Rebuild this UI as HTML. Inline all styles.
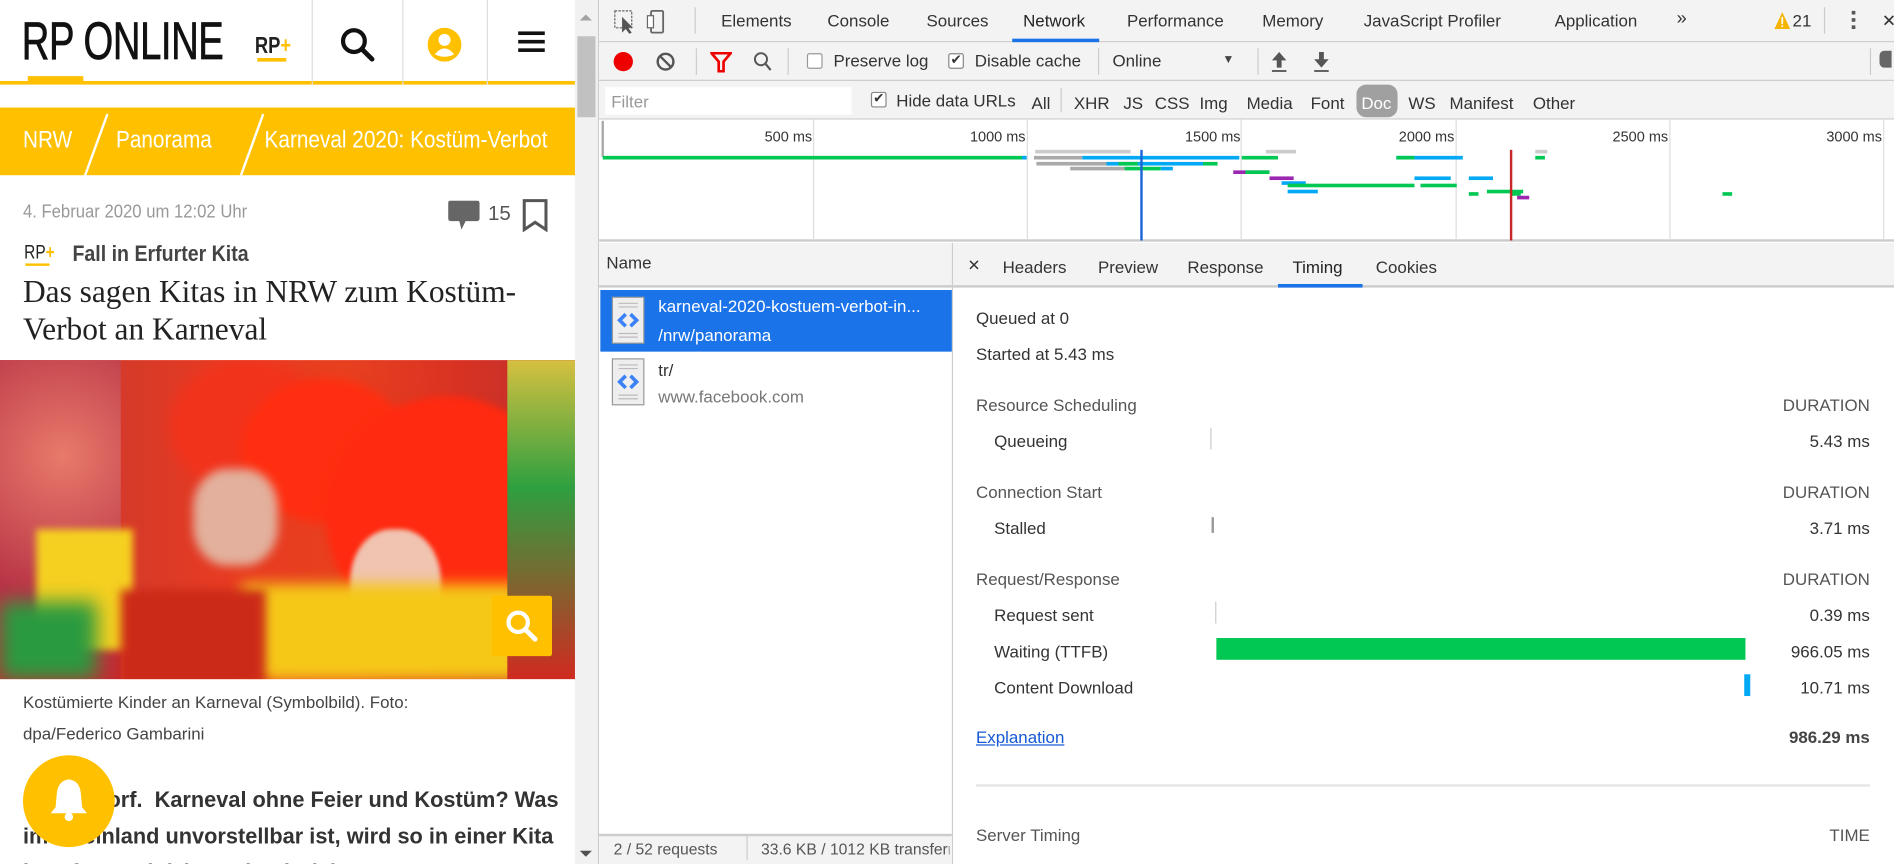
<!DOCTYPE html>
<html><head><meta charset="utf-8"><style>
*{box-sizing:border-box;margin:0;padding:0}
html,body{width:1894px;height:864px;overflow:hidden;background:#fff}
#w{position:absolute;left:0;top:0;width:1568px;height:715px;transform:scale(1.20791,1.2084);transform-origin:0 0;font-family:"Liberation Sans",sans-serif;color:#333;font-size:14px}
.a{position:absolute;white-space:nowrap}
.dt{font-size:14px;color:#333}
.g{color:#555}
.bar{position:absolute;height:3px}
.bc{font-size:20px;color:#fff;transform:scaleX(.86);transform-origin:0 0}
</style></head><body><div id="w">

<!-- LEFT PAGE -->
<div class="a" style="left:0;top:0;width:476px;height:715px;background:#fff;overflow:hidden">
  <div class="a" style="left:0;top:0;width:476px;height:70px;border-bottom:3px solid #ffc000"></div>
  <div class="a" style="left:258px;top:0;width:1px;height:70px;background:#ddd"></div>
  <div class="a" style="left:333px;top:0;width:1px;height:70px;background:#ddd"></div>
  <div class="a" style="left:403px;top:0;width:1px;height:70px;background:#ddd"></div>
  <div class="a" style="left:18px;top:10px;font-size:44px;color:#111;letter-spacing:-0.5px;transform:scaleX(.72);transform-origin:0 0;-webkit-text-stroke:0.6px #111">RP ONLINE</div>
  <div class="a" style="left:23px;top:63px;width:46px;height:6px;background:#ffc000"></div>
  <div class="a" style="left:211px;top:28px;font-size:19px;color:#222;font-weight:bold;transform:scaleX(.8);transform-origin:0 0">RP<span style="color:#ffc000">+</span></div>
  <div class="a" style="left:213px;top:48px;width:24px;height:3px;background:#ffc000"></div>
  <svg class="a" style="left:280px;top:21px" width="32" height="32" viewBox="0 0 32 32"><circle cx="13" cy="13" r="9" fill="none" stroke="#111" stroke-width="3.5"/><line x1="20" y1="20" x2="28" y2="28" stroke="#111" stroke-width="4" stroke-linecap="round"/></svg>
  <svg class="a" style="left:354px;top:23px" width="28" height="28" viewBox="0 0 28 28"><circle cx="14" cy="14" r="14" fill="#ffc000"/><circle cx="14" cy="10" r="5" fill="#fff"/><path d="M6 22 Q14 12 22 22 Q14 26 6 22Z" fill="#fff"/></svg>
  <div class="a" style="left:429px;top:26px;width:22px;height:3px;background:#111;box-shadow:0 7px 0 #111,0 14px 0 #111"></div>

  <div class="a" style="left:0;top:89px;width:476px;height:56px;background:#ffc000"></div>
  <div class="a bc" style="left:19px;top:105px">NRW</div>
  <div class="a" style="left:88px;top:94px;width:2px;height:58px;background:#fff;transform:rotate(20deg);transform-origin:0 0"></div>
  <div class="a bc" style="left:96px;top:105px">Panorama</div>
  <div class="a" style="left:217px;top:94px;width:2px;height:58px;background:#fff;transform:rotate(20deg);transform-origin:0 0"></div>
  <div class="a" style="left:219px;top:105px;width:238px;overflow:hidden"><div class="bc">Karneval 2020: Kostüm-Verbot an Karneval</div></div>

  <div class="a" style="left:19px;top:167px;font-size:15px;color:#999;transform:scaleX(.92);transform-origin:0 0">4. Februar 2020 um 12:02 Uhr</div>
  <svg class="a" style="left:371px;top:166px" width="27" height="25" viewBox="0 0 27 25"><rect x="0" y="0" width="26" height="17" rx="2" fill="#666"/><path d="M9 16 L11 24 L15 16Z" fill="#666"/></svg>
  <div class="a" style="left:404px;top:167px;font-size:17px;color:#555">15</div>
  <svg class="a" style="left:432px;top:164px" width="22" height="28" viewBox="0 0 22 28"><path d="M2 2 H20 V26 L11 20 L2 26Z" fill="none" stroke="#555" stroke-width="2.5"/></svg>
  <div class="a" style="left:20px;top:201px;font-size:16px;color:#222;transform:scaleX(.8);transform-origin:0 0">RP<span style="color:#ffc000;font-weight:bold">+</span></div>
  <div class="a" style="left:21px;top:218px;width:20px;height:2px;background:#ffc000"></div>
  <div class="a" style="left:60px;top:200px;font-size:18px;color:#444;font-weight:bold;transform:scaleX(.9);transform-origin:0 0">Fall in Erfurter Kita</div>
  <div class="a" style="left:19px;top:226px;font-size:26px;line-height:31px;color:#222;font-family:'Liberation Serif',serif;white-space:normal;width:450px">Das sagen Kitas in NRW zum Kostüm-Verbot an Karneval</div>

  <div class="a" style="left:0;top:298px;width:476px;height:264px;overflow:hidden;background:linear-gradient(90deg,#b8243a 0%,#d43a2a 20%,#e83b22 40%,#e8401f 60%,#d83223 80%,#b83030 100%)">
    <div class="a" style="left:-20px;top:0;width:120px;height:264px;background:radial-gradient(circle at 60% 30%,#e87a6a,#b83346 60%,#c42b30)"></div>
    <div class="a" style="left:140px;top:0;width:130px;height:110px;border-radius:50%;background:#f2331c;filter:blur(6px)"></div>
    <div class="a" style="left:200px;top:15px;width:140px;height:120px;border-radius:50%;background:#ff2e10;filter:blur(4px)"></div>
    <div class="a" style="left:270px;top:30px;width:200px;height:200px;border-radius:50%;background:#ff2a10;filter:blur(3px)"></div>
    <div class="a" style="left:160px;top:90px;width:70px;height:80px;border-radius:40%;background:#e2b09c;filter:blur(4px)"></div>
    <div class="a" style="left:290px;top:140px;width:75px;height:95px;border-radius:45%;background:#f0c4b0;filter:blur(2px)"></div>
    <div class="a" style="left:30px;top:140px;width:80px;height:100px;background:#f5d020;filter:blur(3px)"></div>
    <div class="a" style="left:200px;top:185px;width:230px;height:80px;background:#f5c818;filter:blur(6px)"></div>
    <div class="a" style="left:100px;top:190px;width:120px;height:80px;background:#cc2a18;filter:blur(4px)"></div>
    <div class="a" style="left:420px;top:0;width:60px;height:264px;background:linear-gradient(#d6c040,#2ea040 40%,#d02a20)"></div>
    <div class="a" style="left:0;top:200px;width:80px;height:64px;background:#2a9a40;filter:blur(8px)"></div>
    <div class="a" style="left:407px;top:195px;width:50px;height:50px;background:#ffc000;border-radius:2px"></div>
    <svg class="a" style="left:417px;top:205px" width="30" height="30" viewBox="0 0 30 30"><circle cx="12" cy="12" r="8" fill="none" stroke="#fff" stroke-width="3.5"/><line x1="18" y1="18" x2="26" y2="26" stroke="#fff" stroke-width="4" stroke-linecap="round"/></svg>
  </div>
  <div class="a" style="left:19px;top:568px;font-size:14px;line-height:26px;color:#444;white-space:normal;width:400px">Kostümierte Kinder an Karneval (Symbolbild). Foto: dpa/Federico Gambarini</div>
  <div class="a" style="left:19px;top:647px;font-size:18px;line-height:30px;color:#333;font-weight:bold;white-space:normal;width:450px">Düsseldorf.&nbsp; Karneval ohne Feier und Kostüm? Was im Rheinland unvorstellbar ist, wird so in einer Kita in Erfurt praktiziert. Die Einrichtung</div>
  <div class="a" style="left:19px;top:625px;width:76px;height:76px;border-radius:50%;background:#ffc000"></div>
  <svg class="a" style="left:40px;top:643px" width="34" height="38" viewBox="0 0 34 38"><path d="M17 2 Q8 3 7 14 L6 25 L2 30 H32 L28 25 L27 14 Q26 3 17 2Z" fill="#fff"/><circle cx="17" cy="33" r="3.5" fill="#fff"/></svg>
</div>
<!-- scrollbar -->
<div class="a" style="left:476px;top:0;width:19px;height:715px;background:#f1f1f1"></div>
<div class="a" style="left:478px;top:30px;width:15px;height:67px;background:#c1c1c1"></div>
<div class="a" style="left:480px;top:12px;width:0;height:0;border:5px solid transparent;border-bottom-color:#a3a3a3;border-top:0"></div>
<div class="a" style="left:480px;top:704px;width:0;height:0;border:5px solid transparent;border-top-color:#505050;border-bottom:0"></div>
<div class="a" style="left:495px;top:0;width:1px;height:715px;background:#ccc"></div>

<!-- DEVTOOLS -->
<div class="a dt" style="left:496px;top:0;width:1072px;height:715px;background:#fff">
  <div class="a" style="left:0;top:0;width:1072px;height:35px;background:#f3f3f3;border-bottom:1px solid #ccc"></div>
  <svg class="a" style="left:12px;top:8px" width="50" height="20" viewBox="0 0 50 20"><rect x="1" y="1" width="14" height="14" fill="none" stroke="#666" stroke-dasharray="2 1"/><path d="M7 6 L7 19 L10 16 L13 20 L15 19 L12 15 L16 15Z" fill="#555"/><rect x="31" y="1" width="10" height="18" rx="1" fill="none" stroke="#666" stroke-width="1.5"/><rect x="28" y="5" width="5" height="10" fill="#fff" stroke="#666"/></svg>
  <div class="a" style="left:79px;top:6px;width:1px;height:22px;background:#ccc"></div>
  <div class="a" style="left:101px;top:9px">Elements</div>
  <div class="a" style="left:189px;top:9px">Console</div>
  <div class="a" style="left:271px;top:9px">Sources</div>
  <div class="a" style="left:351px;top:9px;color:#222">Network</div>
  <div class="a" style="left:342px;top:32px;width:72px;height:3px;background:#1a73e8"></div>
  <div class="a" style="left:437px;top:9px">Performance</div>
  <div class="a" style="left:549px;top:9px">Memory</div>
  <div class="a" style="left:633px;top:9px">JavaScript Profiler</div>
  <div class="a" style="left:791px;top:9px">Application</div>
  <div class="a" style="left:892px;top:7px;font-size:15px">»</div>
  <svg class="a" style="left:973px;top:10px" width="13" height="14" viewBox="0 0 13 14"><path d="M6.5 0 L13 14 H0Z" fill="#f4b400"/><rect x="5.8" y="4" width="1.4" height="6" fill="#fff"/><rect x="5.8" y="11" width="1.4" height="1.4" fill="#fff"/></svg>
  <div class="a" style="left:988px;top:9px">21</div>
  <div class="a" style="left:1014px;top:6px;width:1px;height:22px;background:#ccc"></div>
  <div class="a" style="left:1037px;top:9px;width:3px;height:3px;background:#555;box-shadow:0 6px 0 #555,0 12px 0 #555"></div>
  <div class="a" style="left:1062px;top:9px;font-size:14px">✕</div>

  <!-- toolbar -->
  <div class="a" style="left:0;top:35px;width:1072px;height:32px;background:#f3f3f3;border-bottom:1px solid #ccc"></div>
  <div class="a" style="left:12px;top:43px;width:16px;height:16px;border-radius:50%;background:#e00"></div>
  <svg class="a" style="left:47px;top:43px" width="16" height="16" viewBox="0 0 16 16"><circle cx="8" cy="8" r="6.5" fill="none" stroke="#555" stroke-width="2"/><line x1="3.5" y1="3.5" x2="12.5" y2="12.5" stroke="#555" stroke-width="2"/></svg>
  <div class="a" style="left:80px;top:40px;width:1px;height:22px;background:#ccc"></div>
  <svg class="a" style="left:92px;top:43px" width="18" height="17" viewBox="0 0 18 17"><path d="M1 1 H17 L11 8 V16 H7 V8Z" fill="none" stroke="#e00" stroke-width="2.2"/></svg>
  <svg class="a" style="left:127px;top:42px" width="17" height="18" viewBox="0 0 17 18"><circle cx="7" cy="7" r="5" fill="none" stroke="#555" stroke-width="1.6"/><line x1="10.5" y1="10.5" x2="15" y2="16" stroke="#555" stroke-width="1.8"/></svg>
  <div class="a" style="left:156px;top:40px;width:1px;height:22px;background:#ccc"></div>
  <div class="a" style="left:172px;top:44px;width:13px;height:13px;border:1px solid #999;border-radius:2px;background:#fff"></div>
  <div class="a" style="left:194px;top:42px">Preserve log</div>
  <div class="a" style="left:289px;top:44px;width:13px;height:13px;border:1px solid #888;border-radius:2px;background:#fff;font-size:11px;line-height:11px;text-align:center">✔</div>
  <div class="a" style="left:311px;top:42px">Disable cache</div>
  <div class="a" style="left:413px;top:40px;width:1px;height:22px;background:#ccc"></div>
  <div class="a" style="left:425px;top:42px">Online</div>
  <div class="a" style="left:516px;top:44px;font-size:10px;color:#444">▼</div>
  <div class="a" style="left:545px;top:40px;width:1px;height:22px;background:#ccc"></div>
  <svg class="a" style="left:556px;top:42px" width="60" height="18" viewBox="0 0 60 18"><path d="M7 1 L13 8 H9 V14 H5 V8 H1Z" fill="#555"/><rect x="1" y="16" width="12" height="1.5" fill="#555"/><path d="M42 14 L48 7 H44 V1 H40 V7 H36Z" fill="#555"/><rect x="36" y="16" width="12" height="1.5" fill="#555"/></svg>
  <div class="a" style="left:1052px;top:40px;width:1px;height:22px;background:#ccc"></div>
  <div class="a" style="left:1060px;top:42px;width:10px;height:14px;background:#666;border-radius:4px 0 0 4px"></div>

  <!-- filter row -->
  <div class="a" style="left:0;top:67px;width:1072px;height:32px;background:#f3f3f3;border-bottom:1px solid #ccc"></div>
  <div class="a" style="left:5px;top:72px;width:204px;height:23px;background:#fff"></div>
  <div class="a" style="left:10px;top:76px;color:#999">Filter</div>
  <div class="a" style="left:225px;top:76px;width:13px;height:13px;border:1px solid #888;border-radius:2px;background:#fff;font-size:11px;line-height:11px;text-align:center">✔</div>
  <div class="a" style="left:246px;top:75px">Hide data URLs</div>
  <div class="a" style="left:358px;top:77px">All</div>
  <div class="a" style="left:382px;top:73px;width:1px;height:20px;background:#ccc"></div>
  <div class="a" style="left:393px;top:77px">XHR</div>
  <div class="a" style="left:434px;top:77px">JS</div>
  <div class="a" style="left:460px;top:77px">CSS</div>
  <div class="a" style="left:497px;top:77px">Img</div>
  <div class="a" style="left:536px;top:77px">Media</div>
  <div class="a" style="left:589px;top:77px">Font</div>
  <div class="a" style="left:627px;top:70px;width:34px;height:27px;background:#a0a0a0;border-radius:8px"></div>
  <div class="a" style="left:631px;top:77px;color:#fff">Doc</div>
  <div class="a" style="left:670px;top:77px">WS</div>
  <div class="a" style="left:704px;top:77px">Manifest</div>
  <div class="a" style="left:773px;top:77px">Other</div>

  <!-- overview -->
  <div class="a" style="left:0;top:99px;width:1072px;height:101px;background:#fff;border-bottom:2px solid #ccc"></div>
  <div class="a" style="left:2px;top:100px;width:2px;height:30px;background:#aaa"></div>
  <div class="a" style="left:177px;top:99px;width:1px;height:100px;background:#ddd"></div>
  <div class="a" style="left:354px;top:99px;width:1px;height:100px;background:#ddd"></div>
  <div class="a" style="left:531px;top:99px;width:1px;height:100px;background:#ddd"></div>
  <div class="a" style="left:709px;top:99px;width:1px;height:100px;background:#ddd"></div>
  <div class="a" style="left:886px;top:99px;width:1px;height:100px;background:#ddd"></div>
  <div class="a" style="left:1063px;top:99px;width:1px;height:100px;background:#ddd"></div>
  <div class="a" style="left:137px;top:106px;font-size:12px">500 ms</div>
  <div class="a" style="left:307px;top:106px;font-size:12px">1000 ms</div>
  <div class="a" style="left:485px;top:106px;font-size:12px">1500 ms</div>
  <div class="a" style="left:662px;top:106px;font-size:12px">2000 ms</div>
  <div class="a" style="left:839px;top:106px;font-size:12px">2500 ms</div>
  <div class="a" style="left:1016px;top:106px;font-size:12px">3000 ms</div>
  <div class="bar" style="left:3px;top:129px;width:350px;background:#00c853"></div>
  <div class="bar" style="left:350px;top:129px;width:4px;background:#03a9f4"></div>
  <div class="bar" style="left:361px;top:124px;width:79px;background:#ccc"></div>
  <div class="bar" style="left:360px;top:129px;width:40px;background:#aaa"></div>
  <div class="bar" style="left:400px;top:129px;width:130px;background:#03a9f4"></div>
  <div class="bar" style="left:362px;top:134px;width:90px;background:#aaa"></div>
  <div class="bar" style="left:420px;top:134px;width:80px;background:#03a9f4"></div>
  <div class="bar" style="left:430px;top:134px;width:16px;background:#00c853"></div>
  <div class="bar" style="left:500px;top:134px;width:12px;background:#00c853"></div>
  <div class="bar" style="left:390px;top:138px;width:45px;background:#aaa"></div>
  <div class="bar" style="left:435px;top:138px;width:30px;background:#00c853"></div>
  <div class="bar" style="left:465px;top:138px;width:10px;background:#03a9f4"></div>
  <div class="bar" style="left:532px;top:129px;width:30px;background:#00c853"></div>
  <div class="bar" style="left:552px;top:124px;width:25px;background:#ccc"></div>
  <div class="bar" style="left:525px;top:141px;width:30px;background:#9c27b0"></div>
  <div class="bar" style="left:535px;top:141px;width:20px;background:#00c853"></div>
  <div class="bar" style="left:555px;top:146px;width:20px;background:#9c27b0"></div>
  <div class="bar" style="left:565px;top:150px;width:20px;background:#03a9f4"></div>
  <div class="bar" style="left:570px;top:152px;width:105px;background:#00c853"></div>
  <div class="bar" style="left:570px;top:157px;width:25px;background:#03a9f4"></div>
  <div class="bar" style="left:660px;top:129px;width:55px;background:#03a9f4"></div>
  <div class="bar" style="left:660px;top:129px;width:15px;background:#00c853"></div>
  <div class="bar" style="left:675px;top:146px;width:30px;background:#03a9f4"></div>
  <div class="bar" style="left:680px;top:152px;width:30px;background:#00c853"></div>
  <div class="bar" style="left:720px;top:146px;width:20px;background:#03a9f4"></div>
  <div class="bar" style="left:735px;top:157px;width:30px;background:#00c853"></div>
  <div class="bar" style="left:775px;top:124px;width:10px;background:#ccc"></div>
  <div class="bar" style="left:775px;top:129px;width:8px;background:#00c853"></div>
  <div class="bar" style="left:720px;top:159px;width:8px;background:#00c853"></div>
  <div class="bar" style="left:755px;top:159px;width:8px;background:#00c853"></div>
  <div class="bar" style="left:760px;top:162px;width:10px;background:#9c27b0"></div>
  <div class="bar" style="left:930px;top:159px;width:8px;background:#00c853"></div>
  <div class="a" style="left:448px;top:124px;width:1.5px;height:75px;background:#1a65d6"></div>
  <div class="a" style="left:754px;top:124px;width:1.5px;height:75px;background:#c62828"></div>

  <!-- list -->
  <div class="a" style="left:0;top:201px;width:292px;height:37px;background:#f3f3f3;border-bottom:2px solid #ccc"></div>
  <div class="a" style="left:6px;top:209px">Name</div>
  <div class="a" style="left:292px;top:201px;width:1px;height:514px;background:#ccc"></div>
  <div class="a" style="left:1px;top:240px;width:291px;height:51px;background:#1a73e8"></div>
  <svg class="a" style="left:10px;top:245px" width="28" height="40" viewBox="0 0 28 40"><rect x="1" y="1" width="26" height="38" fill="#eee" stroke="#999"/><path d="M6 6H22M6 9H22M6 31H22M6 34H22" stroke="#bbb"/><path d="M12 15 L7 20 L12 25 M16 15 L21 20 L16 25" fill="none" stroke="#3b82f6" stroke-width="3"/></svg>
  <div class="a" style="left:49px;top:245px;color:#fff">karneval-2020-kostuem-verbot-in...</div>
  <div class="a" style="left:49px;top:269px;color:#fff">/nrw/panorama</div>
  <svg class="a" style="left:10px;top:296px" width="28" height="40" viewBox="0 0 28 40"><rect x="1" y="1" width="26" height="38" fill="#eee" stroke="#999"/><path d="M6 6H22M6 9H22M6 31H22M6 34H22" stroke="#bbb"/><path d="M12 15 L7 20 L12 25 M16 15 L21 20 L16 25" fill="none" stroke="#3b82f6" stroke-width="3"/></svg>
  <div class="a" style="left:49px;top:298px">tr/</div>
  <div class="a" style="left:49px;top:320px;color:#777">www.facebook.com</div>
  <div class="a" style="left:0;top:690px;width:292px;height:25px;background:#f3f3f3;border-top:2px solid #ccc"></div>
  <div class="a" style="left:12px;top:695px;color:#555;font-size:13px">2 / 52 requests</div>
  <div class="a" style="left:122px;top:692px;width:1px;height:20px;background:#ccc"></div>
  <div class="a" style="left:134px;top:695px;color:#555;font-size:13px;width:156px;overflow:hidden">33.6 KB / 1012 KB transferred</div>

  <!-- detail tabs -->
  <div class="a" style="left:293px;top:201px;width:779px;height:37px;background:#f3f3f3;border-bottom:2px solid #ccc"></div>
  <div class="a" style="left:305px;top:212px;font-size:13px">✕</div>
  <div class="a" style="left:334px;top:213px">Headers</div>
  <div class="a" style="left:413px;top:213px">Preview</div>
  <div class="a" style="left:487px;top:213px">Response</div>
  <div class="a" style="left:574px;top:213px;color:#222">Timing</div>
  <div class="a" style="left:562px;top:235px;width:70px;height:3px;background:#1a73e8"></div>
  <div class="a" style="left:643px;top:213px">Cookies</div>

  <div class="a" style="left:312px;top:255px">Queued at 0</div>
  <div class="a" style="left:312px;top:285px">Started at 5.43 ms</div>
  <div class="a g" style="left:312px;top:327px">Resource Scheduling</div>
  <div class="a g" style="right:20px;top:327px">DURATION</div>
  <div class="a" style="left:327px;top:357px">Queueing</div>
  <div class="a" style="left:506px;top:354px;width:1px;height:18px;background:#ccc"></div>
  <div class="a" style="right:20px;top:357px">5.43 ms</div>
  <div class="a g" style="left:312px;top:399px">Connection Start</div>
  <div class="a g" style="right:20px;top:399px">DURATION</div>
  <div class="a" style="left:327px;top:429px">Stalled</div>
  <div class="a" style="left:507px;top:428px;width:2px;height:13px;background:#999"></div>
  <div class="a" style="right:20px;top:429px">3.71 ms</div>
  <div class="a g" style="left:312px;top:471px">Request/Response</div>
  <div class="a g" style="right:20px;top:471px">DURATION</div>
  <div class="a" style="left:327px;top:501px">Request sent</div>
  <div class="a" style="left:510px;top:498px;width:1px;height:18px;background:#ccc"></div>
  <div class="a" style="right:20px;top:501px">0.39 ms</div>
  <div class="a" style="left:327px;top:531px">Waiting (TTFB)</div>
  <div class="a" style="left:511px;top:528px;width:438px;height:18px;background:#00c853"></div>
  <div class="a" style="right:20px;top:531px">966.05 ms</div>
  <div class="a" style="left:327px;top:561px">Content Download</div>
  <div class="a" style="left:948px;top:558px;width:5px;height:18px;background:#03a9f4"></div>
  <div class="a" style="right:20px;top:561px">10.71 ms</div>
  <div class="a" style="left:312px;top:602px;color:#1558d6;text-decoration:underline">Explanation</div>
  <div class="a" style="right:20px;top:602px;font-weight:bold;color:#444">986.29 ms</div>
  <div class="a" style="left:312px;top:649px;width:740px;height:2px;background:#e6e6e6"></div>
  <div class="a g" style="left:312px;top:683px">Server Timing</div>
  <div class="a g" style="right:20px;top:683px">TIME</div>
</div>
</div></body></html>
